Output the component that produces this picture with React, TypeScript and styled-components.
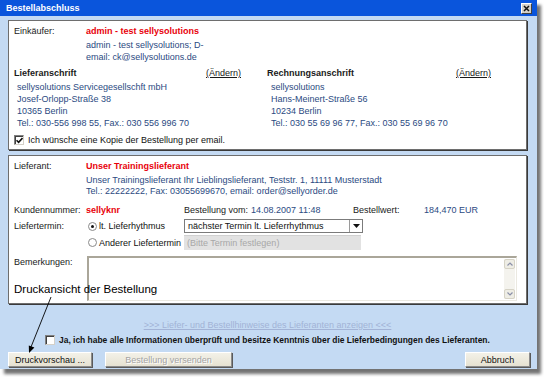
import React from 'react'
import styled, { createGlobalStyle } from 'styled-components'

const GlobalStyle = createGlobalStyle`
  html, body {
    margin: 0;
    padding: 0;
    background: #fff;
  }
  body {
    font-family: 'Liberation Sans', Arial, sans-serif;
    font-size: 9px;
    color: #1a1a1a;
  }
`

const Page = styled.div`
  width: 544px;
  height: 377px;
  overflow: hidden;
`

const Window = styled.div`
  position: relative;
  width: 537px;
  height: 369px;
  background: #c4daf3;
  box-shadow: 4px 5px 3px rgba(0, 0, 0, 0.55);
  display: flex;
  flex-direction: column;
`

const TitleBar = styled.div`
  height: 16px;
  padding: 0 5px 0 6px;
  background: #0a55dc;
  color: #fff;
  font-weight: bold;
  font-size: 9px;
  display: flex;
  align-items: center;
  justify-content: space-between;
`

const CloseButton = styled.div`
  width: 9px;
  height: 9px;
  background: #d4d0c8;
  border-top: 1px solid #fff;
  border-left: 1px solid #fff;
  border-right: 1px solid #404040;
  border-bottom: 1px solid #404040;
  display: flex;
  align-items: center;
  justify-content: center;
`

const Body = styled.div`
  flex: 1;
  padding: 4px 10px 0 8px;
  display: flex;
  flex-direction: column;
`

const Panel = styled.div<{ $height: number }>`
  position: relative;
  box-sizing: border-box;
  height: ${(p) => p.$height}px;
  background: #fff;
  border: 1px solid #6e6e6e;
  box-shadow: 1px 1px 0 #3a3a3a;
  padding: 4px 8px 0 5px;
  white-space: nowrap;
  & + & {
    margin-top: 5px;
  }
`

const LabelRow = styled.div<{ $top?: number; $lh?: number }>`
  display: grid;
  grid-template-columns: 72px 1fr;
  line-height: ${(p) => p.$lh ?? 12}px;
  margin-top: ${(p) => p.$top ?? 0}px;
`

const Label = styled.div`
  color: #1a1a1a;
`

const Red = styled.div`
  color: #e8000b;
  font-weight: bold;
`

const Blue = styled.div<{ $top?: number; $lh?: number }>`
  color: #2b4a82;
  margin-top: ${(p) => p.$top ?? 0}px;
  line-height: ${(p) => p.$lh ?? 12}px;
`

const AddressGrid = styled.div`
  display: grid;
  grid-template-columns: 227px 224px;
  column-gap: 26px;
  margin-top: 4px;
  line-height: 12px;
`

const AddressHead = styled.div`
  display: flex;
  justify-content: space-between;
  font-weight: bold;
`

const Change = styled.span`
  font-weight: normal;
  text-decoration: underline;
`

const AddressLines = styled(Blue)<{ $indent: number }>`
  margin-top: 2px;
  padding-left: ${(p) => p.$indent}px;
`

const CheckRow = styled.div<{ $top: number; $indent?: number; $bold?: boolean }>`
  display: flex;
  align-items: center;
  gap: 4px;
  line-height: 12px;
  margin-top: ${(p) => p.$top}px;
  padding-left: ${(p) => p.$indent ?? 0}px;
  font-weight: ${(p) => (p.$bold ? 'bold' : 'normal')};
  font-size: ${(p) => (p.$bold ? '8.45px' : '9px')};
  white-space: nowrap;
  color: #111;
`

const CheckBox = styled.div`
  width: 8px;
  height: 8px;
  background: #fff;
  border-top: 1px solid #808080;
  border-left: 1px solid #808080;
  border-right: 1px solid #d4d0c8;
  border-bottom: 1px solid #d4d0c8;
  box-shadow: inset 1px 1px 0 #404040;
  display: flex;
  align-items: center;
  justify-content: center;
`

const InfoRow = styled.div`
  display: grid;
  grid-template-columns: 72px 98px 67px 102px 71px auto;
  line-height: 12px;
  margin-top: 7px;
`

const Value = styled.div`
  color: #2b4a82;
`

const TerminRow = styled.div<{ $top: number; $h: number }>`
  display: grid;
  grid-template-columns: 72px 98px 179px;
  align-items: center;
  height: ${(p) => p.$h}px;
  margin-top: ${(p) => p.$top}px;
`

const RadioLabel = styled.div`
  display: flex;
  align-items: center;
  gap: 2px;
  padding-left: 2px;
  color: #111;
`

const Radio = styled.div<{ $checked?: boolean }>`
  box-sizing: border-box;
  width: 9px;
  height: 9px;
  border-radius: 50%;
  border: 1px solid #8a8a8a;
  background: #fff;
  display: flex;
  align-items: center;
  justify-content: center;
  &::after {
    content: '';
    width: 3px;
    height: 3px;
    border-radius: 50%;
    background: ${(p) => (p.$checked ? '#111' : 'transparent')};
  }
`

const Select = styled.div`
  box-sizing: border-box;
  height: 14px;
  border: 1px solid #7b7b7b;
  background: #fff;
  display: flex;
  align-items: center;
  color: #111;
`

const SelectText = styled.div`
  flex: 1;
  padding-left: 3px;
`

const SelectArrow = styled.div`
  width: 12px;
  height: 100%;
  border-left: 1px solid #9a9a9a;
  display: flex;
  align-items: center;
  justify-content: center;
`

const DisabledInput = styled.div`
  box-sizing: border-box;
  height: 15px;
  width: 177px;
  background: #e2e2e2;
  border-top: 1px solid #d0d0d0;
  color: #a8a8a8;
  padding-left: 3px;
  display: flex;
  align-items: center;
`

const RemarkRow = styled.div`
  display: grid;
  grid-template-columns: 73px 430px;
  align-items: start;
  margin-top: 6px;
  line-height: 12px;
`

const TextArea = styled.div`
  box-sizing: border-box;
  height: 45px;
  background: #fff;
  border-top: 2px solid #aaa699;
  border-left: 2px solid #aaa699;
  border-right: 1px solid #ebe9e1;
  border-bottom: 1px solid #ebe9e1;
  display: flex;
  justify-content: flex-end;
  padding: 1px;
`

const ScrollBar = styled.div`
  width: 11px;
  display: flex;
  flex-direction: column;
  justify-content: space-between;
  background: #f4f3ee;
`

const ScrollButton = styled.div`
  box-sizing: border-box;
  height: 10px;
  background: #eeede5;
  border: 1px solid #d6d3c6;
  border-radius: 2px;
  display: flex;
  align-items: center;
  justify-content: center;
`

const Annotation = styled.div`
  position: absolute;
  left: 5px;
  top: 126px;
  font-size: 11.5px;
  line-height: 14px;
  color: #000;
`

const Arrow = styled.svg`
  position: absolute;
  left: 20px;
  top: 294px;
`

const HintLink = styled.div`
  margin-top: 15px;
  line-height: 12px;
  text-align: center;
  color: #a2b3d6;
  text-decoration: underline;
`

const ButtonRow = styled.div`
  display: flex;
  gap: 13px;
  margin-top: 6px;
  margin-right: -3px;
`

const Button = styled.div<{ $width: number; $disabled?: boolean }>`
  box-sizing: border-box;
  width: ${(p) => p.$width}px;
  height: 15px;
  background: linear-gradient(#f3f1e8, #e6e2d2);
  border-top: 1px solid #fff;
  border-left: 1px solid #fff;
  border-right: 1px solid #8c8c8c;
  border-bottom: 1px solid #8c8c8c;
  box-shadow: 1px 1px 0 #5a5a5a;
  display: flex;
  align-items: center;
  justify-content: center;
  color: ${(p) => (p.$disabled ? '#a3a3a3' : '#111')};
  text-shadow: ${(p) => (p.$disabled ? '1px 1px 0 #fff' : 'none')};
  &:last-child {
    margin-left: auto;
  }
`

const Check = () => (
  <svg width="7" height="7" viewBox="0 0 7 7">
    <path d="M0.5 3.2 L2.6 5.3 L6.5 1" stroke="#111" strokeWidth="1.6" fill="none" />
  </svg>
)

const Chevron = ({ up }: { up?: boolean }) => (
  <svg width="6" height="4" viewBox="0 0 6 4">
    <path d={up ? 'M0.5 3.5 L3 1 L5.5 3.5' : 'M0.5 0.5 L3 3 L5.5 0.5'} stroke="#8a8fa8" strokeWidth="1.2" fill="none" />
  </svg>
)

export default function App() {
  return (
    <Page>
      <GlobalStyle />
      <Window>
        <TitleBar>
          <span>Bestellabschluss</span>
          <CloseButton>
            <svg width="7" height="7" viewBox="0 0 7 7">
              <path d="M1 1 L6 6 M6 1 L1 6" stroke="#111" strokeWidth="1.5" />
            </svg>
          </CloseButton>
        </TitleBar>
        <Body>
          <Panel $height={130}>
            <LabelRow>
              <Label>Einkäufer:</Label>
              <div>
                <Red>admin - test sellysolutions</Red>
                <Blue $top={2}>
                  admin - test sellysolutions; D-
                  <br />
                  email: ck@sellysolutions.de
                </Blue>
              </div>
            </LabelRow>
            <AddressGrid>
              <div>
                <AddressHead>
                  Lieferanschrift <Change>(Ändern)</Change>
                </AddressHead>
                <AddressLines $indent={3}>
                  sellysolutions Servicegesellschft mbH
                  <br />
                  Josef-Orlopp-Straße 38
                  <br />
                  10365 Berlin
                  <br />
                  Tel.: 030-556 998 55, Fax.: 030 556 996 70
                </AddressLines>
              </div>
              <div>
                <AddressHead>
                  Rechnungsanschrift <Change>(Ändern)</Change>
                </AddressHead>
                <AddressLines $indent={4}>
                  sellysolutions
                  <br />
                  Hans-Meinert-Straße 56
                  <br />
                  10234 Berlin
                  <br />
                  Tel.: 030 55 69 96 77, Fax.: 030 55 69 96 70
                </AddressLines>
              </div>
            </AddressGrid>
            <CheckRow $top={5}>
              <CheckBox>
                <Check />
              </CheckBox>
              Ich wünsche eine Kopie der Bestellung per email.
            </CheckRow>
          </Panel>

          <Panel $height={149}>
            <LabelRow>
              <Label>Lieferant:</Label>
              <div>
                <Red>Unser Trainingslieferant</Red>
                <Blue $top={3} $lh={11}>
                  Unser Trainingslieferant Ihr Lieblingslieferant, Teststr. 1, 11111 Musterstadt
                  <br />
                  Tel.: 22222222, Fax: 03055699670, email: order@sellyorder.de
                </Blue>
              </div>
            </LabelRow>
            <InfoRow>
              <Label>Kundennummer:</Label>
              <Red>sellyknr</Red>
              <Label>Bestellung vom:</Label>
              <Value>14.08.2007 11:48</Value>
              <Label>Bestellwert:</Label>
              <Value>184,470 EUR</Value>
            </InfoRow>
            <TerminRow $top={3} $h={14}>
              <Label>Liefertermin:</Label>
              <RadioLabel>
                <Radio $checked />
                lt. Lieferhythmus
              </RadioLabel>
              <Select>
                <SelectText>nächster Termin lt. Lieferrhythmus</SelectText>
                <SelectArrow>
                  <svg width="7" height="4" viewBox="0 0 7 4">
                    <path d="M0 0 L7 0 L3.5 4 Z" fill="#111" />
                  </svg>
                </SelectArrow>
              </Select>
            </TerminRow>
            <TerminRow $top={2} $h={15}>
              <span />
              <RadioLabel>
                <Radio />
                Anderer Liefertermin
              </RadioLabel>
              <DisabledInput>(Bitte Termin festlegen)</DisabledInput>
            </TerminRow>
            <RemarkRow>
              <Label>Bemerkungen:</Label>
              <TextArea>
                <ScrollBar>
                  <ScrollButton>
                    <Chevron up />
                  </ScrollButton>
                  <ScrollButton>
                    <Chevron />
                  </ScrollButton>
                </ScrollBar>
              </TextArea>
            </RemarkRow>
            <Annotation>Druckansicht der Bestellung</Annotation>
          </Panel>

          <HintLink>&gt;&gt;&gt; Liefer- und Bestellhinweise des Lieferanten anzeigen &lt;&lt;&lt;</HintLink>
          <CheckRow $top={3} $indent={37} $bold>
            <CheckBox />
            Ja, ich habe alle Informationen überprüft und besitze Kenntnis über die Lieferbedingungen des Lieferanten.
          </CheckRow>
          <ButtonRow>
            <Button $width={84}>Druckvorschau ...</Button>
            <Button $width={127} $disabled>
              Bestellung versenden
            </Button>
            <Button $width={65}>Abbruch</Button>
          </ButtonRow>
        </Body>
        <Arrow width="40" height="64" viewBox="0 0 40 64">
          <line x1="31" y1="3" x2="11" y2="53" stroke="#000" strokeWidth="0.9" />
          <polygon points="9,59 14.4,53.6 8.8,51.4" fill="#000" />
        </Arrow>
      </Window>
    </Page>
  )
}
